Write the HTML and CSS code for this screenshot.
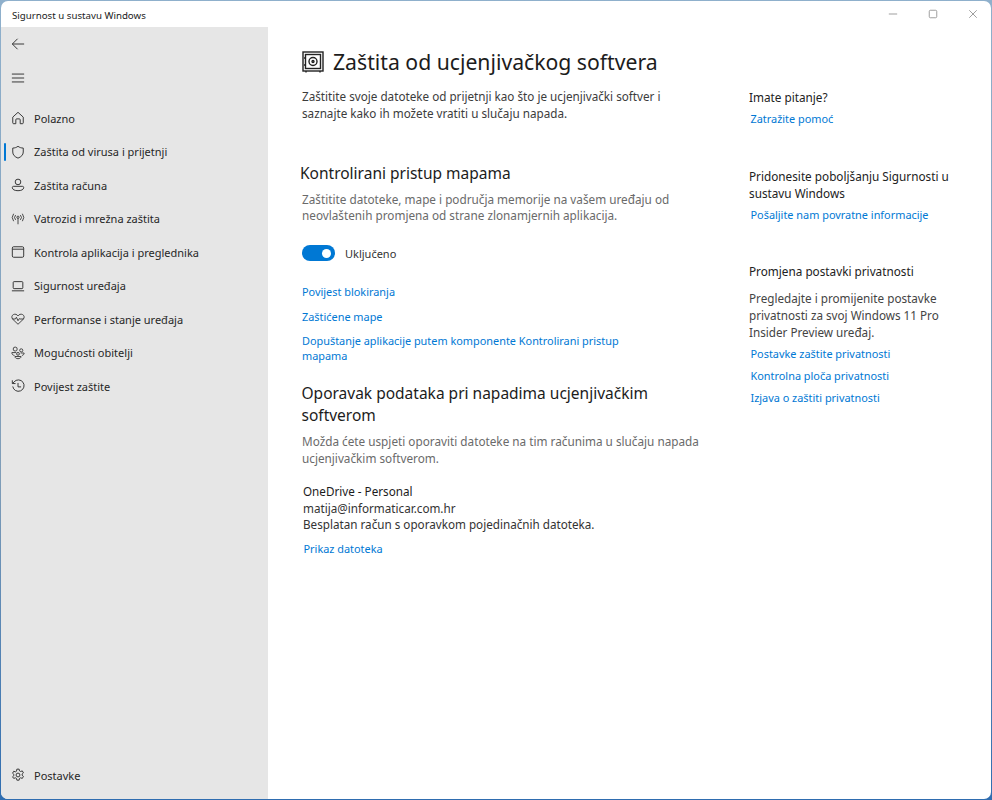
FILE: index.html
```html
<!DOCTYPE html>
<html lang="hr">
<head>
<meta charset="utf-8">
<title>Sigurnost u sustavu Windows</title>
<link rel="stylesheet" href="styles.css">
</head>
<body>
<div class="window">
  <header class="titlebar">
    <span class="app-title">Sigurnost u sustavu Windows</span>
    <div class="win-controls">
      <svg viewBox="0 0 12 12" class="win-icon"><path d="M1 6h10"/></svg>
      <svg viewBox="0 0 12 12" class="win-icon"><rect x="1.500" y="1.500" width="9" height="9" rx="1.500"/></svg>
      <svg viewBox="0 0 12 12" class="win-icon"><path d="M1.500 1.500l9 9M10.500 1.500l-9 9"/></svg>
    </div>
  </header>
  <div class="body">
    <aside class="sidebar">
      <div class="top-icons">
        <svg viewBox="0 0 16 16" class="nav-icon back"><path d="M15 8H1.500M7.500 2L1.500 8l6 6"/></svg>
        <svg viewBox="0 0 16 16" class="nav-icon burger"><path d="M1 3.500h14M1 8h14M1 12.500h14"/></svg>
      </div>
      <nav class="nav">
        <a class="nav-item"><svg viewBox="0 0 16 16" class="nav-icon"><path d="M2 7l6-5.500L14 7v6.500a1 1 0 0 1-1 1h-2.500V10a1 1 0 0 0-1-1h-3a1 1 0 0 0-1 1v4.500H3a1 1 0 0 1-1-1z"/></svg><span>Polazno</span></a>
        <a class="nav-item active"><svg viewBox="0 0 16 16" class="nav-icon"><path d="M8 1.500c1.800 1.300 3.700 2 6 2V8c0 3.300-2.200 5.500-6 7-3.800-1.500-6-3.700-6-7V3.500c2.300 0 4.200-.7 6-2z"/></svg><span>Zaštita od virusa i prijetnji</span></a>
        <a class="nav-item"><svg viewBox="0 0 16 16" class="nav-icon"><circle cx="8" cy="4.500" r="3.200"/><path d="M3 9.500h10a1.500 1.500 0 0 1 1.500 1.500c0 2.300-2.800 3.500-6.500 3.500S1.500 13.300 1.500 11A1.500 1.500 0 0 1 3 9.500z"/></svg><span>Zaštita računa</span></a>
        <a class="nav-item"><svg viewBox="0 0 16 16" class="nav-icon thin"><circle cx="8" cy="6" r="1.300"/><path d="M8 7v7M5.300 3.500a4 4 0 0 0 0 5.500M10.700 3.500a4 4 0 0 1 0 5.500M3 2a7 7 0 0 0 0 8.500M13 2a7 7 0 0 1 0 8.500"/></svg><span>Vatrozid i mrežna zaštita</span></a>
        <a class="nav-item"><svg viewBox="0 0 16 16" class="nav-icon"><rect x="1.500" y="2" width="13" height="12" rx="1.500"/><path d="M1.500 4.800h13"/></svg><span>Kontrola aplikacija i preglednika</span></a>
        <a class="nav-item"><svg viewBox="0 0 16 16" class="nav-icon"><rect x="2.500" y="3" width="11" height="8" rx="1"/><path d="M1 13.500h14"/></svg><span>Sigurnost uređaja</span></a>
        <a class="nav-item"><svg viewBox="0 0 16 16" class="nav-icon thin"><path d="M8 14L2 8.300C.3 6.500.8 3.800 2.800 2.900 4.800 2 6.800 2.700 8 4.500c1.200-1.800 3.200-2.500 5.200-1.600 2 .9 2.500 3.600.8 5.400z"/><path d="M1.500 8h3.500l1.200-2L8 10l1.500-2.500.7.5h4.300"/></svg><span>Performanse i stanje uređaja</span></a>
        <a class="nav-item"><svg viewBox="0 0 16 16" class="nav-icon thin"><circle cx="4.800" cy="3.500" r="2.300"/><circle cx="11.700" cy="5" r="1.800"/><circle cx="8" cy="9" r="1.600"/><path d="M1 7.500h5M1 7.500c0 2 1 3 3 3.300M11 8h4c0 1.500-.8 2.500-2.500 2.800M4.500 12h7c0 1.500-1.500 2.500-3.500 2.500S4.500 13.500 4.500 12z"/></svg><span>Mogućnosti obitelji</span></a>
        <a class="nav-item"><svg viewBox="0 0 16 16" class="nav-icon"><path d="M2 8.500A6.500 6.500 0 1 0 3.500 3.300L1.800 5M1.500 1.500V5.200h3.700M8 4.500V9h3.500"/></svg><span>Povijest zaštite</span></a>
      </nav>
      <a class="nav-item settings"><svg viewBox="0 0 16 16" class="nav-icon"><circle cx="8" cy="8" r="2.200"/><path d="M6.700 1.300h2.600l.4 2 1.300.7 1.900-.7 1.300 2.300-1.500 1.300v1.400l1.500 1.300-1.300 2.300-1.900-.7-1.300.7-.4 2H6.700l-.4-2-1.300-.7-1.900.7L1.800 10l1.500-1.300V7.300L1.800 6l1.300-2.300 1.900.7 1.300-.7z"/></svg><span>Postavke</span></a>
    </aside>
    <main class="content">
      <section class="primary">
        <div class="page-head">
          <svg viewBox="0 0 22 22" class="page-icon"><rect x="1" y="1" width="20" height="19"/><rect x="3.500" y="3.500" width="15" height="14"/><circle cx="11" cy="10.500" r="4"/><circle cx="11" cy="10.500" r="1"/><path d="M4 20v1.500M18 20v1.500M2 7h2M2 14h2"/></svg>
          <h1>Zaštita od ucjenjivačkog softvera</h1>
        </div>
        <p class="lead">Zaštitite svoje datoteke od prijetnji kao što je ucjenjivački softver i saznajte kako ih možete vratiti u slučaju napada.</p>
        <h2 class="folder-head">Kontrolirani pristup mapama</h2>
        <p class="muted folder-text">Zaštitite datoteke, mape i područja memorije na vašem uređaju od neovlaštenih promjena od strane zlonamjernih aplikacija.</p>
        <div class="toggle-row">
          <span class="toggle"><span class="knob"></span></span>
          <span class="toggle-label">Uključeno</span>
        </div>
        <div class="link-list">
          <a class="link">Povijest blokiranja</a>
          <a class="link">Zaštićene mape</a>
          <a class="link">Dopuštanje aplikacije putem komponente Kontrolirani pristup mapama</a>
        </div>
        <h2 class="recovery-head">Oporavak podataka pri napadima ucjenjivačkim softverom</h2>
        <p class="muted recovery-text">Možda ćete uspjeti oporaviti datoteke na tim računima u slučaju napada ucjenjivačkim softverom.</p>
        <div class="account">
          <div class="account-name">OneDrive - Personal</div>
          <div>matija@informaticar.com.hr</div>
          <div>Besplatan račun s oporavkom pojedinačnih datoteka.</div>
          <a class="link account-link">Prikaz datoteka</a>
        </div>
      </section>
      <aside class="secondary">
        <div class="side-group ask">
          <h3>Imate pitanje?</h3>
          <a class="link side-link">Zatražite pomoć</a>
        </div>
        <div class="side-group contribute">
          <h3>Pridonesite poboljšanju Sigurnosti u sustavu Windows</h3>
          <a class="link side-link">Pošaljite nam povratne informacije</a>
        </div>
        <div class="side-group">
          <h3>Promjena postavki privatnosti</h3>
          <p class="side-text">Pregledajte i promijenite postavke privatnosti za svoj Windows 11 Pro Insider Preview uređaj.</p>
          <a class="link side-link">Postavke zaštite privatnosti</a>
          <a class="link side-link">Kontrolna ploča privatnosti</a>
          <a class="link side-link">Izjava o zaštiti privatnosti</a>
        </div>
      </aside>
    </main>
  </div>
</div>
</body>
</html>
```
FILE: styles.css
```css
* { box-sizing: border-box; }
html, body { height: 100%; }
body {
  margin: 0;
  padding: 1px;
  background: linear-gradient(180deg, #8fb0cc 0%, #7f9db8 60%, #2f6db0 100%);
  font-family: "Noto Sans", "Open Sans", "Liberation Sans", sans-serif;
  color: #1f1f1f;
  font-size: 12px;
  overflow: hidden;
}
.window {
  height: 798px;
  width: 990px;
  background: #fff;
  border-radius: 7px;
  overflow: hidden;
  display: flex;
  flex-direction: column;
}
.titlebar {
  height: 26px;
  flex: none;
  display: flex;
  align-items: center;
  justify-content: space-between;
  padding: 3px 0 0 11px;
}
.app-title { font-size: 9.700px; color: #222; }
.win-controls { display: flex; gap: 30px; padding-right: 13px; align-items: center; margin-top: -3px; }
.win-icon { width: 10px; height: 10px; fill: none; stroke: #8b8b8b; stroke-width: 1; }
.body { flex: 1; display: flex; min-height: 0; }
.sidebar {
  width: 267px;
  flex: none;
  background: #e6e6e6;
  display: flex;
  flex-direction: column;
  padding-bottom: 7px;
}
.top-icons { display: flex; flex-direction: column; gap: 20px; padding: 10px 0 0 10px; height: 74.500px; }
.nav { flex: 1; }
.nav-item {
  height: 33.500px;
  display: flex;
  align-items: center;
  gap: 9px;
  padding-left: 10px;
  font-size: 11px;
  color: #262626;
  position: relative;
}
.nav-item.active::before {
  content: "";
  position: absolute;
  left: 3px;
  top: 8px;
  width: 2px;
  height: 18px;
  background: #0078d4;
  border-radius: 1px;
}
.nav-icon {
  width: 14px;
  height: 14px;
  flex: none;
  fill: none;
  stroke: #333;
  stroke-width: 1.100;
}
.nav-icon.thin { stroke-width: 1; }
.settings { flex: none; }
.content { flex: 1; display: flex; min-width: 0; }
.primary { width: 402px; margin-left: 34px; flex: none; padding-top: 19px; }
.secondary { margin-left: 45px; width: 205px; padding-top: 62px; }
.page-head { display: flex; align-items: center; gap: 9px; height: 32px; }
.page-icon { width: 22px; height: 22px; fill: none; stroke: #222; stroke-width: 1.400; flex: none; }
h1 { margin: 0; font-weight: 400; font-size: 21.200px; line-height: 32px; color: #1c1c1c; white-space: nowrap; }
h2 { margin: 0; font-weight: 400; font-size: 15.500px; color: #1c1c1c; line-height: 22px; }
p { margin: 0; }
.lead { margin-top: 10px; font-size: 11.700px; line-height: 17px; color: #3c3c3c; width: 370px; }
.folder-head { margin: 40px 0 0 -2px; }
.muted { color: #6a6a6a; font-size: 11.750px; line-height: 16.500px; }
.folder-text { margin-top: 6.500px; }
.toggle-row { display: flex; align-items: center; gap: 10px; margin-top: 21.500px; height: 16px; }
.toggle { width: 33px; height: 16px; border-radius: 8px; background: #0078d4; display: flex; align-items: center; justify-content: flex-end; padding-right: 4px; }
.knob { width: 9px; height: 9px; border-radius: 50%; background: #fff; }
.toggle-label { font-size: 11px; color: #333; }
.link { display: block; color: #0078d4; font-size: 10.900px; line-height: 15px; }
.link-list { margin-top: 23px; width: 330px; display: flex; flex-direction: column; gap: 9.500px; }
.recovery-head { margin: 19px 0 0 -0.500px; line-height: 22px; }
.recovery-text { margin-top: 7px; }
.account { margin: 18px 0 0 1px; font-size: 11.680px; line-height: 16.500px; color: #333; }
.account-name { color: #1c1c1c; }
.account-link { margin: 7px 0 0 0.500px; }
.side-group { margin-bottom: 32px; }
.side-group.ask { margin-bottom: 42.500px; }
.side-group.contribute { margin-bottom: 41.500px; }
.side-group h3 { margin: 0; font-weight: 400; font-size: 11.750px; line-height: 17px; color: #222; }
.side-link { margin: 4.500px 0 0 1.500px; }
.side-text { font-size: 11.700px; line-height: 17px; color: #444; margin-top: 10px; margin-bottom: 5px; }
.side-group .side-link + .side-link { margin-top: 7px; }
```
